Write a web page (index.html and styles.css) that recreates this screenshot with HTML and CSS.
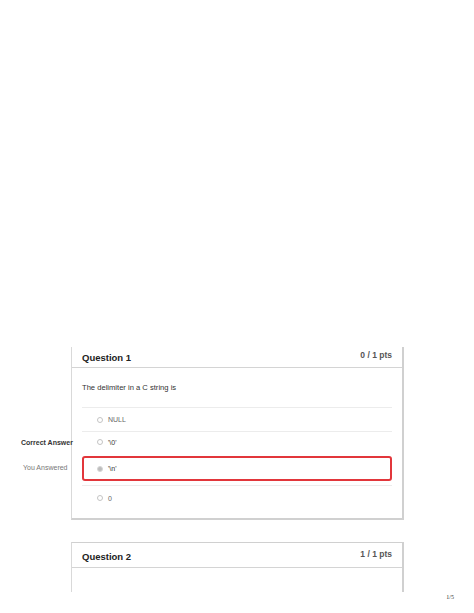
FILE: index.html
```html
<!DOCTYPE html>
<html lang="en">
<head>
    <meta charset="UTF-8">
    <meta name="viewport" content="width=device-width, initial-scale=1.0">
    <title>Quiz Results</title>
    <link rel="stylesheet" href="styles.css">
</head>
<body>
    <div class="sheet">
        <div class="question first">
            <div class="q-header">
                <span class="q-name">Question 1</span>
                <span class="q-pts">0 / 1 pts</span>
            </div>
            <div class="q-body">
                <p class="q-text">The delimiter in a C string is</p>
                <div class="answers">
                    <div class="answer">
                        <span class="radio"></span>
                        <span class="a-text muted">NULL</span>
                    </div>
                    <div class="answer correct">
                        <span class="tag tag-correct">Correct Answer</span>
                        <span class="radio"></span>
                        <span class="a-text">'\0'</span>
                    </div>
                    <div class="answer wrong">
                        <span class="tag tag-you">You Answered</span>
                        <span class="radio checked"></span>
                        <span class="a-text">'\n'</span>
                    </div>
                    <div class="answer last">
                        <span class="radio"></span>
                        <span class="a-text muted">0</span>
                    </div>
                </div>
            </div>
        </div>

        <div class="question second">
            <div class="q-header">
                <span class="q-name">Question 2</span>
                <span class="q-pts">1 / 1 pts</span>
            </div>
            <div class="q-body tall"></div>
        </div>
    </div>
    <div class="page-num">1/5</div>
</body>
</html>
```

FILE: styles.css
```css
body {
    margin: 0;
    padding: 0;
    background-color: #fff;
    font-family: "Liberation Sans", Arial, sans-serif;
    color: #2d3b45;
}
.sheet {
    height: 592px;
    overflow: hidden;
    padding-top: 347px;
    box-sizing: border-box;
}
.question {
    margin-left: 71px;
    width: 333px;
    box-sizing: border-box;
    border-left: 1px solid #d9d9d9;
    border-right: 2px solid #d0d0d0;
    border-bottom: 2px solid #d0d0d0;
}
.question.second {
    margin-top: 22px;
    border-top: 1px solid #d0d0d0;
}
.q-header {
    display: flex;
    justify-content: space-between;
    align-items: flex-start;
    height: 20px;
    padding: 0 10px;
    border-bottom: 1px solid #d4d4d4;
}
.first .q-header {
    padding-top: 5px;
    height: 15px;
}
.second .q-header {
    padding-top: 8px;
    height: 16px;
}
.q-name {
    font-size: 9.5px;
    font-weight: bold;
    line-height: 11px;
    color: #222;
}
.q-pts {
    font-size: 8.5px;
    font-weight: bold;
    line-height: 10px;
    color: #555;
    margin-top: -2px;
}
.q-body {
    padding: 0 10px 8px;
}
.q-body.tall {
    height: 60px;
}
.q-text {
    margin: 0;
    padding: 15px 0 14px;
    font-size: 7.6px;
    line-height: 10px;
    color: #333;
}
.answer {
    position: relative;
    display: flex;
    align-items: center;
    padding-left: 15px;
    border-top: 1px solid #ececec;
    height: 23px;
    font-size: 7px;
}
.answer.correct {
    height: 20px;
    padding-top: 1px;
    align-items: flex-start;
    line-height: 19px;
}
.answer.correct .radio {
    margin-top: 6px;
}
.answer.wrong {
    border: 2px solid #e2363b;
    border-radius: 3px;
    height: 21px;
    padding-left: 13px;
    margin-top: 3px;
}
.answer.last {
    margin-top: 4px;
    height: 24px;
}
.radio {
    width: 6px;
    height: 6px;
    box-sizing: border-box;
    border: 1px solid #c4c4c4;
    border-radius: 50%;
    background-color: #fff;
    margin-right: 5px;
    flex-shrink: 0;
}
.radio.checked {
    background-color: #bdbdbd;
    border-color: #d6d6d6;
}
.a-text {
    color: #333;
}
.a-text.muted {
    color: #666;
}
.tag {
    position: absolute;
    left: -61px;
    font-size: 7px;
    white-space: nowrap;
}
.tag-correct {
    top: 1px;
    line-height: 19px;
    font-weight: bold;
    color: #333;
}
.tag-you {
    top: 4px;
    line-height: 11px;
    color: #777;
}
.page-num {
    text-align: right;
    padding-right: 20px;
    font-family: "Liberation Serif", serif;
    font-size: 6px;
    line-height: 10px;
    color: #333;
}
```
